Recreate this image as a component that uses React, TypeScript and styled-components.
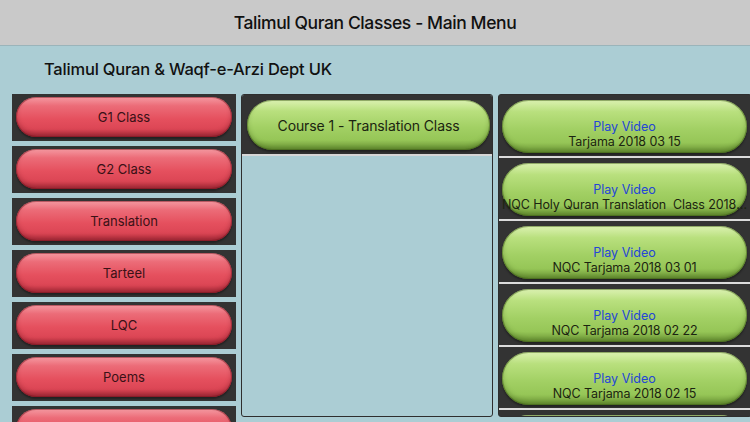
import React from 'react';
import styled, { createGlobalStyle } from 'styled-components';

const GlobalStyle = createGlobalStyle`
    html, body {
        margin: 0;
        padding: 0;
        background: #abcdd4;
        overflow: hidden;
        font-family: Inter, "Noto Sans", "Liberation Sans", sans-serif;
    }
`;

const Page = styled.div`
    width: 750px;
    height: 422px;
    overflow: hidden;
`;

const Header = styled.div`
    height: 45px;
    background: #c9c9c9;
    border-bottom: 1px solid #9ab4ba;
    display: flex;
    align-items: center;
    justify-content: center;
    font-size: 17.5px;
    font-weight: 500;
    color: #111;
    letter-spacing: -0.4px;
`;

const Subtitle = styled.div`
    margin: 12px 0 14px 44px;
    height: 22px;
    line-height: 22px;
    font-size: 16.5px;
    font-weight: 500;
    color: #111;
    letter-spacing: -0.2px;
`;

const Columns = styled.div`
    display: grid;
    grid-template-columns: 224px 252px 254px;
    column-gap: 5px;
    padding-left: 12px;
    height: 323px;
    align-items: start;
`;

const LeftColumn = styled.div`
    display: flex;
    flex-direction: column;
    gap: 5px;
`;

const LeftCell = styled.div`
    height: 47px;
    box-sizing: border-box;
    background: #333;
    padding: 3px 4px 4px 4px;
    display: flex;
`;

const Pill = styled.div<{ tone: 'red' | 'green' }>`
    flex: 1;
    min-width: 0;
    border-radius: 999px;
    display: flex;
    flex-direction: column;
    align-items: center;
    justify-content: center;
    font-size: 13px;
    color: ${p => (p.tone === 'red' ? '#3a1116' : '#1b2410')};
    background: ${p =>
        p.tone === 'red'
            ? 'linear-gradient(to bottom, #f59aa2 0%, #ec6c78 22%, #e5505e 55%, #dc4655 80%, #b3303e 100%)'
            : 'linear-gradient(to bottom, #dcf2b2 0%, #b9e07e 22%, #a2d064 55%, #96c657 80%, #6f9a38 100%)'};
    box-shadow: ${p =>
        p.tone === 'red'
            ? 'inset 0 0 0 1px rgba(120,20,30,0.45), inset 0 -3px 5px rgba(90,10,20,0.35), 0 2px 2px rgba(0,0,0,0.35)'
            : 'inset 0 0 0 1px rgba(60,90,20,0.45), inset 0 -3px 5px rgba(40,70,10,0.35), 0 2px 2px rgba(0,0,0,0.35)'};
`;

const Panel = styled.div<{ dark?: boolean }>`
    height: 323px;
    box-sizing: border-box;
    border: 1px solid #2e2e2e;
    border-radius: 3px;
    background: ${p => (p.dark ? '#333' : 'transparent')};
    overflow: hidden;
    display: flex;
    flex-direction: column;
`;

const CourseCell = styled.div`
    height: 61px;
    box-sizing: border-box;
    background: #333;
    border-bottom: 2px solid #d6d6d6;
    padding: 5px 2px 4px 5px;
    display: flex;
    flex-shrink: 0;
`;

const CourseLabel = styled.span`
    font-size: 14px;
    letter-spacing: -0.1px;
`;

const VideoCell = styled.div`
    height: 63px;
    box-sizing: border-box;
    border-bottom: 2px solid #dcdcdc;
    padding: 5px 4px 3px 3px;
    display: flex;
    flex-shrink: 0;
`;

const VideoPill = styled(Pill)`
    justify-content: flex-start;
    padding-top: 19px;
    box-sizing: border-box;
`;

const PlayText = styled.div`
    color: #2447d6;
    font-size: 12.5px;
    line-height: 15px;
`;

const VideoTitle = styled.div`
    width: 100%;
    font-size: 12.5px;
    line-height: 15px;
    text-align: center;
    white-space: pre;
    overflow: hidden;
    text-overflow: ellipsis;
    letter-spacing: -0.1px;
`;

const menuItems = ['G1 Class', 'G2 Class', 'Translation', 'Tarteel', 'LQC', 'Poems', ''];

const videos = [
    'Tarjama 2018 03 15',
    'NQC Holy Quran Translation  Class 2018 03 08',
    'NQC Tarjama 2018 03 01',
    'NQC Tarjama 2018 02 22',
    'NQC Tarjama 2018 02 15',
];

const App: React.FC = () => {
    return (
        <Page>
            <GlobalStyle />
            <Header>Talimul Quran Classes - Main Menu</Header>
            <Subtitle>Talimul Quran &amp; Waqf-e-Arzi Dept UK</Subtitle>
            <Columns>
                <LeftColumn>
                    {menuItems.map((item, i) => (
                        <LeftCell key={i}>
                            <Pill tone="red">{item}</Pill>
                        </LeftCell>
                    ))}
                </LeftColumn>
                <Panel>
                    <CourseCell>
                        <Pill tone="green">
                            <CourseLabel>Course 1 - Translation Class</CourseLabel>
                        </Pill>
                    </CourseCell>
                </Panel>
                <Panel dark>
                    {videos.map((v, i) => (
                        <VideoCell key={i}>
                            <VideoPill tone="green">
                                <PlayText>Play Video</PlayText>
                                <VideoTitle>{v}</VideoTitle>
                            </VideoPill>
                        </VideoCell>
                    ))}
                    <VideoCell>
                        <VideoPill tone="green" />
                    </VideoCell>
                </Panel>
            </Columns>
        </Page>
    );
};

export default App;
